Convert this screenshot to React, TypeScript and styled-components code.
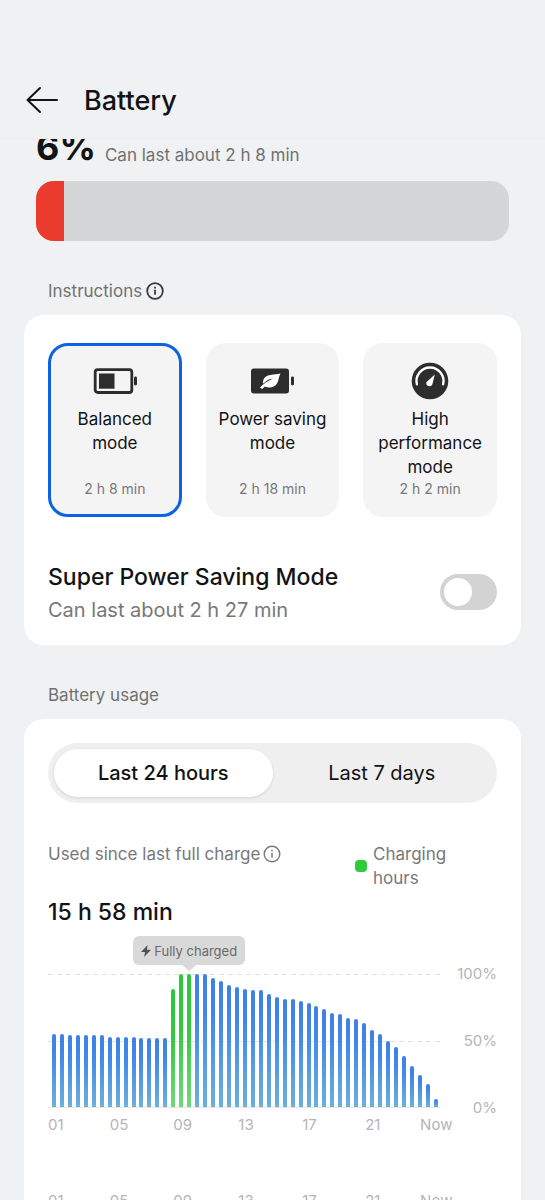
import React, { useState } from "react";
import styled, { createGlobalStyle, css } from "styled-components";

const GlobalStyle = createGlobalStyle`
  *, *::before, *::after { box-sizing: border-box; }
  html, body, #root { height: 100%; }
  body {
    margin: 0;
    background: #eff1f3;
    color: #121314;
    font-family: Inter, "Noto Sans", sans-serif;
    font-size: 17px;
    line-height: 24px;
  }
  button {
    font: inherit;
    color: inherit;
    border: 0;
    padding: 0;
    margin: 0;
    background: none;
    cursor: pointer;
  }
  h1, h2, h3, p { margin: 0; font-weight: 400; }
  svg { display: block; flex: none; }
`;

const Screen = styled.div`
  display: flex;
  flex-direction: column;
  height: 100vh;
  overflow: hidden;
`;

const Header = styled.header`
  display: flex;
  align-items: center;
  gap: 24px;
  flex: none;
  padding: 81px 24px 17px;
  border-bottom: 1px solid #ebecee;
`;

const Title = styled.h1`
  font-size: 27px;
  line-height: 40px;
  font-weight: 500;
`;

const Scroller = styled.main`
  flex: 1;
  min-height: 0;
  overflow-y: auto;
  scrollbar-width: none;
  padding: 0 24px;
`;

const Level = styled.section`
  padding: 0 12px;
`;

const LevelRow = styled.div`
  display: flex;
  align-items: flex-end;
  gap: 9px;
  height: 28px;
`;

const Percent = styled.span`
  font-size: 36px;
  line-height: 40px;
  font-weight: 700;
`;

const Muted = styled.span`
  color: #707172;
`;

const Gauge = styled.div`
  height: 60px;
  margin-top: 14px;
  border-radius: 18px;
  background: #d5d6d8;
  overflow: hidden;
`;

const GaugeFill = styled.div`
  width: 6%;
  height: 100%;
  background: #eb3b2f;
`;

const SectionHead = styled.div`
  display: flex;
  align-items: center;
  gap: 4px;
  padding: 38px 24px 12px;
`;

const SectionTitle = styled.h2`
  font-size: 17px;
  color: #707172;
`;

const InfoButton = styled.button`
  color: #38393a;
`;

const Card = styled.section`
  padding: 24px 24px 20px;
  border-radius: 20px;
  background: #fff;
`;

const Modes = styled.div`
  display: grid;
  grid-template-columns: repeat(3, 1fr);
  gap: 24px;
  padding-top: 4px;
`;

const ModeButton = styled.button<{ $selected?: boolean }>`
  display: flex;
  flex-direction: column;
  align-items: center;
  height: 174px;
  padding: 16px 6px;
  border: 3px solid ${(p) => (p.$selected ? "#0c62e2" : "#f4f4f4")};
  border-radius: 20px;
  background: #f4f4f4;
`;

const ModeName = styled.span`
  flex: 1;
  margin-top: 7px;
`;

const ModeTime = styled.span`
  font-size: 14px;
  line-height: 18px;
  color: #777879;
`;

const SwitchRow = styled.label`
  display: flex;
  align-items: center;
  justify-content: space-between;
  padding-top: 42px;
`;

const SwitchText = styled.span`
  display: flex;
  flex-direction: column;
`;

const SwitchTitle = styled.span`
  font-size: 23px;
  line-height: 36px;
  font-weight: 500;
`;

const SwitchNote = styled.span`
  font-size: 20px;
  line-height: 30px;
  color: #777879;
`;

const Toggle = styled.input`
  appearance: none;
  display: flex;
  align-items: center;
  flex: none;
  width: 57px;
  height: 36px;
  margin: 0;
  padding: 0 4px;
  border-radius: 18px;
  background: #d3d3d3;
  cursor: pointer;
  &::before {
    content: "";
    width: 28px;
    height: 28px;
    border-radius: 50%;
    background: #fff;
  }
  &:checked {
    justify-content: flex-end;
    background: #0c62e2;
  }
`;

const Tabs = styled.div`
  display: grid;
  grid-template-columns: 1fr 1fr;
  height: 60px;
  padding: 6px;
  border-radius: 30px;
  background: #efefef;
`;

const Tab = styled.button<{ $active: boolean }>`
  border-radius: 24px;
  font-size: 20px;
  ${(p) =>
    p.$active &&
    css`
      background: #fff;
      font-weight: 500;
      box-shadow: 0 1px 3px rgba(0, 0, 0, 0.12);
    `}
`;

const UsageHead = styled.div`
  display: flex;
  justify-content: space-between;
  align-items: flex-start;
  padding-top: 39px;
`;

const Inline = styled.div`
  display: flex;
  align-items: center;
  gap: 3px;
  color: #777879;
`;

const Legend = styled.div`
  display: flex;
  align-items: center;
  gap: 6px;
  width: 142px;
  color: #777879;
`;

const Swatch = styled.span`
  flex: none;
  width: 12px;
  height: 12px;
  border-radius: 4px;
  background: #2ecc3d;
`;

const Duration = styled.p`
  padding: 6px 0;
  font-size: 23px;
  line-height: 32px;
  font-weight: 500;
`;

const Chart = styled.div`
  display: grid;
  grid-template-columns: 1fr 57px;
  padding-top: 40px;
`;

const Plot = styled.div`
  position: relative;
  display: flex;
  align-items: flex-end;
  justify-content: space-between;
  height: 134px;
  padding: 0 2px 0 4px;
  border-bottom: 1px solid #e2e3e4;
`;

const GridLine = styled.div<{ $at: string }>`
  position: absolute;
  left: 0;
  right: 0;
  top: ${(p) => p.$at};
  height: 1px;
  background: repeating-linear-gradient(90deg, #dfe1e3 0 5px, transparent 5px 9px);
`;

const Bar = styled.div<{ $charging: boolean }>`
  position: relative;
  width: 4px;
  border-radius: 2px 2px 0 0;
  background: ${(p) =>
    p.$charging
      ? "linear-gradient(#2bc83a, #2fc93e 40%, #72d87b)"
      : "linear-gradient(#3f7fe8, #4288ea 30%, #6cb0dc)"};
`;

const Tooltip = styled.div`
  position: absolute;
  left: 50%;
  bottom: calc(100% + 9px);
  transform: translateX(-50%);
  display: flex;
  align-items: center;
  gap: 3px;
  height: 29px;
  padding: 0 8px;
  border-radius: 6px;
  background: #d9d9d9;
  color: #68696a;
  font-size: 13px;
  white-space: nowrap;
  &::after {
    content: "";
    position: absolute;
    top: 100%;
    left: calc(50% - 7px);
    border: 7px solid transparent;
    border-top: 6px solid #d9d9d9;
    border-bottom: 0;
  }
`;

const Scale = styled.div`
  display: flex;
  flex-direction: column;
  justify-content: space-between;
  align-items: flex-end;
  margin: -9px 0;
  font-size: 15px;
  line-height: 18px;
  color: #b4b5b6;
`;

const Hours = styled.div`
  display: grid;
  grid-template-columns: repeat(7, 1fr);
  justify-items: center;
  margin: 0 29px 0 -24px;
  padding-top: 8px;
  font-size: 15px;
  line-height: 18px;
  color: #b4b5b6;
`;

const NextHours = styled(Hours)`
  padding-top: 58px;
`;

const InfoIcon = ({ width = 2 }: { width?: number }) => (
  <svg width="18" height="18" viewBox="0 0 18 18" fill="none" stroke="currentColor" strokeWidth={width}>
    <circle cx="9" cy="9" r="7.8" />
    <path d="M9 7.8v5" />
    <path d="M9 4.8v1.6" />
  </svg>
);

const BalancedIcon = () => (
  <svg width="44" height="38" viewBox="0 0 44 38">
    <rect x="2.2" y="7.7" width="36.6" height="22.8" rx="2.5" fill="none" stroke="#2d2d2d" strokeWidth="2.8" />
    <rect x="6" y="11.5" width="15.5" height="15.200" fill="#2d2d2d" />
    <rect x="41" y="14.5" width="3" height="9" rx="1.4" fill="#2d2d2d" />
  </svg>
);

const SavingIcon = () => (
  <svg width="44" height="38" viewBox="0 0 44 38">
    <rect x="1" y="6.5" width="38" height="25" rx="3" fill="#2d2d2d" />
    <rect x="41" y="14.5" width="3" height="9" rx="1.4" fill="#2d2d2d" />
    <path d="M30.500 11.500C24 13 17 12 14 16.500C12.800 18.500 12.900 20.500 13.400 21.800C16 18.500 19.500 17 23 16.500C18.500 18.500 13.500 21.500 10 25.500L12 27L15 24.500C19 26.500 24.500 25.500 27 21.500C29 18.500 28.500 14.500 30.500 11.500Z" fill="#fff" />
  </svg>
);

const PerformanceIcon = () => (
  <svg width="38" height="38" viewBox="0 0 38 38">
    <circle cx="19" cy="19" r="18.300" fill="#2d2d2d" />
    <path d="M5.900 22.300A13.500 13.500 0 1 1 32.100 22.300" fill="none" stroke="#fff" strokeWidth="2.400" strokeLinecap="round" />
    <path d="M23.800 12.600L21.400 22.200A3 3 0 1 1 15.600 19.900Z" fill="#fff" />
  </svg>
);

const MODES = [
  { name: "Balanced mode", time: "2 h 8 min", Icon: BalancedIcon },
  { name: "Power saving mode", time: "2 h 18 min", Icon: SavingIcon },
  { name: "High performance mode", time: "2 h 2 min", Icon: PerformanceIcon },
];

const LEVELS = [
  55, 55, 54, 54, 54, 54, 54, 53, 53, 53, 53, 52, 52, 52, 52, 89, 100, 100, 100, 100, 97, 95, 92, 90, 89, 88, 88,
  85, 83, 81, 81, 80, 78, 76, 74, 71, 70, 67, 66, 63, 58, 55, 50, 45, 38, 31, 24, 17, 6,
];
const FULL_AT = 17;
const HOURS = ["01", "05", "09", "13", "17", "21", "Now"];

export default function App() {
  const [mode, setMode] = useState(0);
  const [tab, setTab] = useState(0);
  return (
    <>
      <GlobalStyle />
      <Screen>
        <Header>
          <button type="button" aria-label="Back">
            <svg width="36" height="36" viewBox="0 0 36 36" fill="none" stroke="#121314" strokeWidth="2" strokeLinecap="round" strokeLinejoin="round">
              <path d="M33 17H3.500M16 5L3.500 17L16 29" />
            </svg>
          </button>
          <Title>Battery</Title>
        </Header>
        <Scroller>
          <Level>
            <LevelRow>
              <Percent>6%</Percent>
              <Muted>Can last about 2 h 8 min</Muted>
            </LevelRow>
            <Gauge>
              <GaugeFill />
            </Gauge>
          </Level>

          <SectionHead>
            <SectionTitle>Instructions</SectionTitle>
            <InfoButton type="button" aria-label="About power modes">
              <InfoIcon width={1.8} />
            </InfoButton>
          </SectionHead>
          <Card>
            <Modes>
              {MODES.map(({ name, time, Icon }, i) => (
                <ModeButton key={name} type="button" $selected={i === mode} aria-pressed={i === mode} onClick={() => setMode(i)}>
                  <Icon />
                  <ModeName>{name}</ModeName>
                  <ModeTime>{time}</ModeTime>
                </ModeButton>
              ))}
            </Modes>
            <SwitchRow>
              <SwitchText>
                <SwitchTitle>Super Power Saving Mode</SwitchTitle>
                <SwitchNote>Can last about 2 h 27 min</SwitchNote>
              </SwitchText>
              <Toggle type="checkbox" role="switch" />
            </SwitchRow>
          </Card>

          <SectionHead>
            <SectionTitle>Battery usage</SectionTitle>
          </SectionHead>
          <Card>
            <Tabs role="tablist">
              {["Last 24 hours", "Last 7 days"].map((label, i) => (
                <Tab key={label} type="button" role="tab" aria-selected={i === tab} $active={i === tab} onClick={() => setTab(i)}>
                  {label}
                </Tab>
              ))}
            </Tabs>
            <UsageHead>
              <Inline>
                <span>Used since last full charge</span>
                <button type="button" aria-label="About usage">
                  <InfoIcon width={1.4} />
                </button>
              </Inline>
              <Legend>
                <Swatch />
                <span>Charging<br />hours</span>
              </Legend>
            </UsageHead>
            <Duration>15 h 58 min</Duration>
            <Chart>
              <Plot>
                <GridLine $at="0" />
                <GridLine $at="50%" />
                {LEVELS.map((level, i) => (
                  <Bar key={i} $charging={i >= 15 && i <= 17} style={{ height: `${level}%` }}>
                    {i === FULL_AT && (
                      <Tooltip>
                        <svg width="10" height="12" viewBox="0 0 10 12">
                          <path d="M6.500 0L0 7H4L3 12L10 4.800H5.800Z" fill="#505152" />
                        </svg>
                        Fully charged
                      </Tooltip>
                    )}
                  </Bar>
                ))}
              </Plot>
              <Scale>
                <span>100%</span>
                <span>50%</span>
                <span>0%</span>
              </Scale>
            </Chart>
            <Hours>
              {HOURS.map((hour) => (
                <span key={hour}>{hour}</span>
              ))}
            </Hours>
            <NextHours>
              {HOURS.map((hour) => (
                <span key={hour}>{hour}</span>
              ))}
            </NextHours>
          </Card>
        </Scroller>
      </Screen>
    </>
  );
}
